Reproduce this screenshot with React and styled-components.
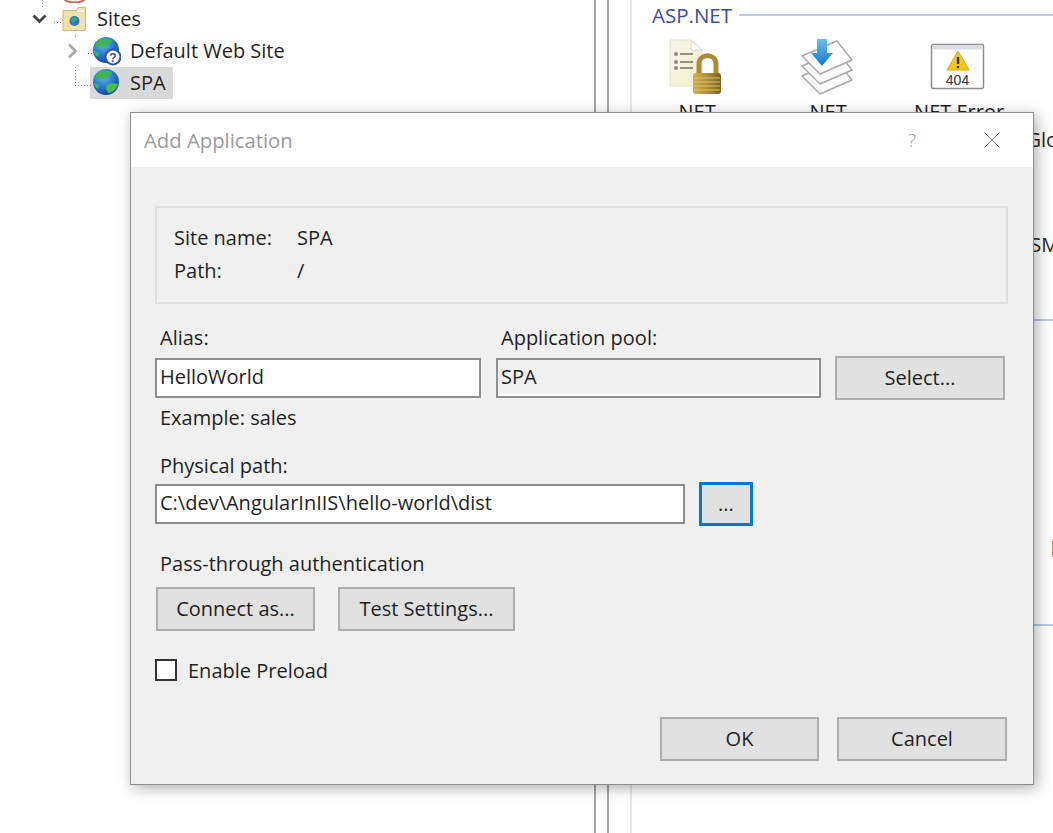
import styled, { createGlobalStyle } from 'styled-components';

const GlobalStyle = createGlobalStyle`
  html, body {
    margin: 0;
    padding: 0;
    background: #fff;
  }
  * {
    box-sizing: border-box;
  }
`;

const uiFont = `"Open Sans", "Noto Sans", Arial, sans-serif`;

const Page = styled.div`
  position: relative;
  display: flex;
  width: 1053px;
  height: 833px;
  overflow: hidden;
  background: #fff;
  font-family: ${uiFont};
  font-size: 20px;
  color: #1f1f1f;
`;

// Левая панель с деревом
const TreePane = styled.div`
  position: relative;
  flex: 0 0 594px;
`;

const TreeLines = styled.svg`
  position: absolute;
  left: 0;
  top: 0;
`;

const TreeList = styled.div`
  margin-top: -29px;
`;

const TreeRow = styled.div`
  display: flex;
  align-items: center;
  height: 32px;
`;

const Twisty = styled.div`
  display: flex;
  justify-content: flex-end;
  align-items: center;
  flex: 0 0 ${(p) => p.$width}px;
  padding-right: 12px;
`;

const NodeBox = styled.div`
  display: flex;
  align-items: center;
  gap: ${(p) => p.$gap}px;
  height: 32px;
  padding: 0 7px 0 3px;
  background: ${(p) => (p.$selected ? '#d9d9d9' : 'transparent')};
`;

const NodeLabel = styled.span`
  padding-bottom: 2px;
`;

const Splitter = styled.div`
  flex: 0 0 36px;
  border-left: 2px solid #a3a3a3;
  position: relative;

  &::after {
    content: '';
    position: absolute;
    left: 11px;
    top: 0;
    bottom: 0;
    width: 2px;
    background: #a3a3a3;
  }
`;

// Правая панель с разделами
const ContentPane = styled.div`
  flex: 1;
  min-width: 0;
  border-left: 2px solid #e8e8e8;
`;

const Section = styled.section`
  position: relative;
  height: 305px;
`;

const SectionHead = styled.div`
  display: flex;
  align-items: center;
  gap: 7px;
  height: 30px;
  padding-left: 20px;
  color: #3a4da4;
  font-size: 20.5px;
  white-space: nowrap;

  &::after {
    content: '';
    flex: 1;
    height: 2px;
    background: #bccbe8;
  }
`;

const FeatureGrid = styled.div`
  display: grid;
  grid-template-columns: repeat(4, 131px);
  grid-auto-rows: 133px;
  margin: 6px 0 0 -3px;
`;

const Feature = styled.div`
  display: flex;
  flex-direction: column;
  align-items: center;
`;

const FeatureIcon = styled.div`
  flex: 0 0 62px;
  height: 62px;
`;

const FeatureLabel = styled.div`
  width: 131px;
  line-height: 28px;
  text-align: center;
`;

const ClippedIcon = styled.div`
  position: absolute;
  right: 0;
  top: 236px;
  width: 1px;
  height: 16px;
  background: #c98f56;
`;

// Диалог
const Dialog = styled.div`
  position: absolute;
  left: 130px;
  top: 112px;
  width: 904px;
  height: 673px;
  display: flex;
  flex-direction: column;
  background: #f0f0f0;
  border: 1px solid #8e8e8e;
  box-shadow: 3px 3px 14px rgba(0, 0, 0, 0.32);
`;

const TitleBar = styled.div`
  display: flex;
  align-items: center;
  flex: 0 0 54px;
  padding-left: 13px;
  background: #fff;
  color: #999;
  font-size: 20.3px;
`;

const TitleText = styled.div`
  flex: 1;
`;

const HelpGlyph = styled.div`
  width: 14px;
  margin-right: 65px;
  color: #9a9a9a;
  font-size: 19px;
  font-weight: 300;
  text-align: center;
`;

const CloseIcon = styled.svg`
  margin-right: 33px;
`;

const DialogBody = styled.div`
  flex: 1;
  display: flex;
  flex-direction: column;
  padding: 39px 25px 0 24px;
`;

const InfoBox = styled.div`
  display: grid;
  grid-template-columns: 123px 1fr;
  grid-auto-rows: 33px;
  align-items: center;
  height: 98px;
  padding: 13px 0 0 17px;
  border: 2px solid #dedede;
`;

const FieldRow = styled.div`
  display: flex;
  align-items: flex-end;
  margin-top: 21px;
`;

const Field = styled.div`
  display: flex;
  flex-direction: column;
  width: ${(p) => p.$width}px;
  margin-right: ${(p) => p.$gap}px;
`;

const Label = styled.div`
  height: 26px;
  margin: ${(p) => p.$top || 0}px 0 ${(p) => p.$bottom || 0}px 5px;
  line-height: 26px;
`;

const TextBox = styled.input`
  width: ${(p) => (p.$width ? `${p.$width}px` : '100%')};
  height: 40px;
  padding: 0 3px 4px;
  border: 2px solid #8f8f8f;
  outline: none;
  background: ${(p) => (p.$disabled ? '#f0f0f0' : '#fff')};
  box-shadow: ${(p) => (p.$disabled ? 'inset -1px -2px 0 #fff' : 'none')};
  color: #1f1f1f;
  font: inherit;
`;

const Button = styled.button`
  width: ${(p) => p.$width}px;
  height: 44px;
  padding: 0 0 2px;
  border: 2px solid #adadad;
  background: #e1e1e1;
  color: #1f1f1f;
  font: inherit;
`;

const SelectButton = styled(Button)`
  margin-bottom: -2px;
`;

const BrowseButton = styled(Button)`
  margin-left: 14px;
  border: 3px solid #0078d7;
`;

const PathRow = styled.div`
  display: flex;
  align-items: center;
  margin-top: 3px;
`;

const ButtonRow = styled.div`
  display: flex;
  gap: ${(p) => p.$gap}px;
  margin: ${(p) => p.$top}px ${(p) => p.$right || 0}px 0 ${(p) => p.$left || 0}px;
  justify-content: ${(p) => (p.$end ? 'flex-end' : 'flex-start')};
`;

const CheckRow = styled.label`
  display: flex;
  align-items: center;
  gap: 11px;
  margin-top: 28px;
  height: 22px;
`;

const CheckBox = styled.input`
  appearance: none;
  width: 22px;
  height: 22px;
  margin: 0;
  border: 2px solid #333;
  background: #fff;
`;

function Globe({ id, badge }) {
  return (
    <svg width="28" height="30" viewBox="0 0 28 30">
      <defs>
        <radialGradient id={id} cx="0.4" cy="0.3" r="0.8">
          <stop offset="0" stopColor="#63b4ec" />
          <stop offset="0.6" stopColor="#1f6cc4" />
          <stop offset="1" stopColor="#123f8e" />
        </radialGradient>
      </defs>
      <circle cx="13" cy="14" r="13" fill={`url(#${id})`} />
      <path d="M8 3c4-1 9-1 11 2 0 3-3 2-5 4-2 3-5 3-6 1-2-1-5 1-6 1 0-3 3-7 6-8z" fill="#3fb54e" />
      <path d="M14 17c3-2 7-2 11-1-1 4-4 8-9 9-2-1-4-5-2-8z" fill="#49bb4c" />
      <path d="M1 15c2 0 4 1 5 3l-1 3c-2-1-4-3-4-6z" fill="#3fb54e" />
      {badge && (
        <g>
          <circle cx="20" cy="21" r="7.500" fill="#fff" stroke="#2b55a8" strokeWidth="2" />
          <text x="20" y="25.500" textAnchor="middle" fontSize="12" fontWeight="700" fontFamily="Liberation Sans, sans-serif" fill="#2b55a8">?</text>
        </g>
      )}
    </svg>
  );
}

function SiteFolder() {
  return (
    <svg width="25" height="26" viewBox="0 0 25 26">
      <path d="M1 4.500h13l2-3h7.500v23H1z" fill="#f3e0aa" stroke="#cdb27a" />
      <path d="M15 4h7v2h-7z" fill="#fff" />
      <circle cx="12.500" cy="15" r="5" fill="#2a78c4" />
      <path d="M10 12c2-1 4-1 5 1-1 2-3 2-4 4-2-1-2-3-1-5z" fill="#44b04c" />
    </svg>
  );
}

function PoolIcon() {
  return (
    <svg width="25" height="32" viewBox="0 0 25 32">
      <path d="M1 27C5 33 20 33 24 27Z" fill="#f4ece6" stroke="#c9635a" strokeWidth="2" />
    </svg>
  );
}

function ChevronDown() {
  return (
    <svg width="15" height="10" viewBox="0 0 15 10">
      <path d="M1.500 1.500 7.500 7.500 13.500 1.500" fill="none" stroke="#444" strokeWidth="2.800" />
    </svg>
  );
}

function ChevronRight() {
  return (
    <svg width="11" height="16" viewBox="0 0 11 16">
      <path d="M2 1.500 8.500 8 2 14.500" fill="none" stroke="#aaa" strokeWidth="2.800" />
    </svg>
  );
}

function LockDocIcon() {
  const ridges = [42, 46, 50, 54];
  return (
    <svg width="56" height="62" viewBox="0 0 56 62">
      <defs>
        <linearGradient id="docFill" x1="0" y1="0" x2="1" y2="1">
          <stop offset="0" stopColor="#f3f3ee" />
          <stop offset="1" stopColor="#f8efc6" />
        </linearGradient>
        <linearGradient id="lockFill" x1="0" y1="0" x2="1" y2="0">
          <stop offset="0" stopColor="#cdb052" />
          <stop offset="0.5" stopColor="#b48e34" />
          <stop offset="1" stopColor="#7c5f1f" />
        </linearGradient>
      </defs>
      <path d="M3 4h21l11 10v36H3z" fill="url(#docFill)" stroke="#e2e0d2" />
      <path d="M24 4v10h11z" fill="#fff" stroke="#d8d8d0" />
      {[18, 26, 32].map((y) => (
        <g key={y}>
          <circle cx="9" cy={y} r="2" fill="#8a8a80" />
          <path d={`M13 ${y}h13`} stroke="#77776e" strokeWidth="1.600" />
        </g>
      ))}
      <path d="M32 38V28c0-11 17-11 17 0v10" fill="none" stroke="#a98b3a" strokeWidth="5" />
      <rect x="26" y="37" width="28" height="21" rx="3" fill="url(#lockFill)" />
      {ridges.map((y) => (
        <path key={y} d={`M27 ${y}h26`} stroke="#dcc67a" strokeWidth="1.200" opacity="0.8" />
      ))}
    </svg>
  );
}

function StackIcon() {
  const sheet = (dy) => `M4 ${20 + dy}L39 ${5 + dy}L54 ${24 + dy}L22 ${38 + dy}Z`;
  return (
    <svg width="56" height="62" viewBox="0 0 56 62">
      <defs>
        <linearGradient id="arrowFill" x1="0" y1="0" x2="0" y2="1">
          <stop offset="0" stopColor="#6cc0f0" />
          <stop offset="1" stopColor="#1478cf" />
        </linearGradient>
      </defs>
      {[20, 10, 0].map((dy) => (
        <path key={dy} d={sheet(dy)} fill="#fdfdfd" stroke="#a8a8a8" strokeWidth="1.400" strokeLinejoin="round" />
      ))}
      <path d="M19 3h10v14h6L24 30 13 17h6z" fill="url(#arrowFill)" />
    </svg>
  );
}

function ErrorPageIcon() {
  return (
    <svg width="56" height="62" viewBox="0 0 56 62">
      <rect x="2.500" y="8.500" width="52" height="44" rx="2" fill="#fff" stroke="#8c8c8c" strokeWidth="1.500" />
      <rect x="3.500" y="9.500" width="50" height="4" fill="#d9dde2" />
      <path d="M29 15L40 34H18Z" fill="#f4c71e" stroke="#d8a90e" strokeLinejoin="round" />
      <path d="M29 21v7" stroke="#3a3000" strokeWidth="2.400" />
      <circle cx="29" cy="31" r="1.300" fill="#3a3000" />
      <text x="28.500" y="49" textAnchor="middle" fontSize="14" fontFamily="Liberation Sans, sans-serif" fill="#333">404</text>
    </svg>
  );
}

const aspItems = [
  { label: '.NET Authorization Rules', icon: <LockDocIcon /> },
  { label: '.NET Compilation', icon: <StackIcon /> },
  { label: '.NET Error Pages', icon: <ErrorPageIcon /> },
  { label: '.NET Globalization' },
  { label: '.NET Profile' },
  { label: '.NET Roles' },
  { label: 'Session State' },
  { label: 'SMTP E-mail' },
];

export default function App() {
  return (
    <Page>
      <GlobalStyle />

      <TreePane>
        <TreeLines width="110" height="100">
          <g stroke="#777" strokeDasharray="1 2" fill="none">
            <path d="M42.500 0v7" />
            <path d="M54 22.500h7" />
            <path d="M75.500 36v3" />
            <path d="M75.500 67v18.500H92" />
            <path d="M88 53.500h6" />
          </g>
        </TreeLines>
        <TreeList>
          <TreeRow>
            <Twisty $width={59} />
            <NodeBox $gap={10}>
              <PoolIcon />
              <NodeLabel>Application Pools</NodeLabel>
            </NodeBox>
          </TreeRow>
          <TreeRow>
            <Twisty $width={59}>
              <ChevronDown />
            </Twisty>
            <NodeBox $gap={10}>
              <SiteFolder />
              <NodeLabel>Sites</NodeLabel>
            </NodeBox>
          </TreeRow>
          <TreeRow>
            <Twisty $width={90}>
              <ChevronRight />
            </Twisty>
            <NodeBox $gap={9}>
              <Globe id="globeDefault" badge />
              <NodeLabel>Default Web Site</NodeLabel>
            </NodeBox>
          </TreeRow>
          <TreeRow>
            <Twisty $width={90} />
            <NodeBox $gap={9} $selected>
              <Globe id="globeSpa" />
              <NodeLabel>SPA</NodeLabel>
            </NodeBox>
          </TreeRow>
        </TreeList>
      </TreePane>

      <Splitter />

      <ContentPane>
        <Section>
          <SectionHead>ASP.NET</SectionHead>
          <FeatureGrid>
            {aspItems.map((item) => (
              <Feature key={item.label}>
                <FeatureIcon>{item.icon}</FeatureIcon>
                <FeatureLabel>{item.label}</FeatureLabel>
              </Feature>
            ))}
          </FeatureGrid>
        </Section>
        <Section>
          <SectionHead>IIS</SectionHead>
          <ClippedIcon />
        </Section>
        <Section>
          <SectionHead>Management</SectionHead>
        </Section>
      </ContentPane>

      <Dialog>
        <TitleBar>
          <TitleText>Add Application</TitleText>
          <HelpGlyph>?</HelpGlyph>
          <CloseIcon width="16" height="16" viewBox="0 0 16 16">
            <path d="M0.500 0.500 15.500 15.500M15.500 0.500 0.500 15.500" stroke="#777" strokeWidth="1" />
          </CloseIcon>
        </TitleBar>

        <DialogBody>
          <InfoBox>
            <span>Site name:</span>
            <span>SPA</span>
            <span>Path:</span>
            <span>/</span>
          </InfoBox>

          <FieldRow>
            <Field $width={326} $gap={15}>
              <Label $bottom={7}>Alias:</Label>
              <TextBox defaultValue="HelloWorld" />
            </Field>
            <Field $width={325} $gap={14}>
              <Label $bottom={7}>Application pool:</Label>
              <TextBox defaultValue="SPA" readOnly $disabled />
            </Field>
            <SelectButton $width={170}>Select...</SelectButton>
          </FieldRow>

          <Label $top={7}>Example: sales</Label>
          <Label $top={22}>Physical path:</Label>

          <PathRow>
            <TextBox $width={530} defaultValue="C:\dev\AngularInIIS\hello-world\dist" />
            <BrowseButton $width={54}>...</BrowseButton>
          </PathRow>

          <Label $top={25}>Pass-through authentication</Label>

          <ButtonRow $gap={23} $top={10} $left={1}>
            <Button $width={159}>Connect as...</Button>
            <Button $width={177}>Test Settings...</Button>
          </ButtonRow>

          <CheckRow>
            <CheckBox type="checkbox" />
            Enable Preload
          </CheckRow>

          <ButtonRow $gap={18} $top={36} $right={1} $end>
            <Button $width={159}>OK</Button>
            <Button $width={170}>Cancel</Button>
          </ButtonRow>
        </DialogBody>
      </Dialog>
    </Page>
  );
}
